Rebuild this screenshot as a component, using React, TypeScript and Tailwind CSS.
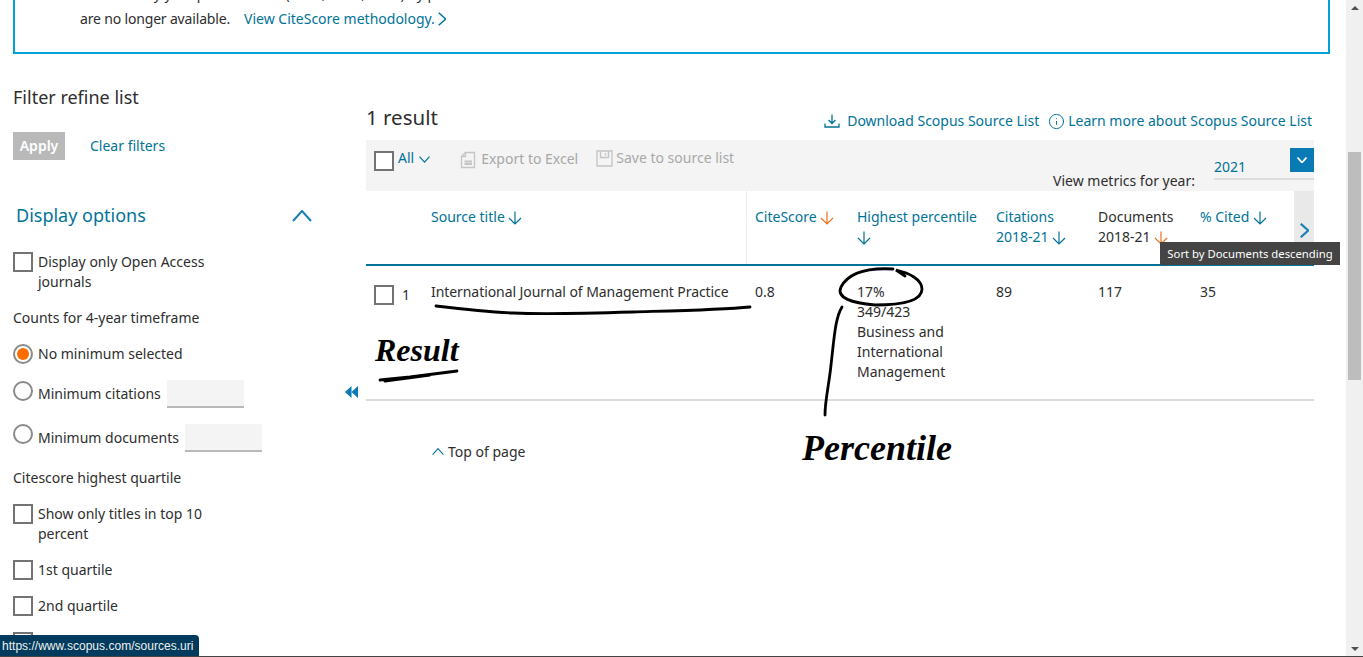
import { Info } from 'lucide-react';
import type { ReactNode } from 'react';

const Checkbox = () => <span className="block w-5 h-5 shrink-0 border-2 border-[#737373] bg-white" />;

const Radio = ({ on }: { on?: boolean }) => (
    <span className="flex items-center justify-center w-5 h-5 shrink-0 rounded-full border-2 border-[#8a8a8a] bg-white">
        {on && <span className="block w-3 h-3 rounded-full bg-[#ff6c00]" />}
    </span>
);

const CheckRow = ({ children }: { children: ReactNode }) => (
    <div className="flex gap-[5px] w-[200px]">
        <Checkbox />
        <span>{children}</span>
    </div>
);

const SortArrow = ({ active }: { active?: boolean }) => (
    <svg width="14" height="14" viewBox="0 0 14 14" fill="none" stroke={active ? '#e9711c' : '#007398'} strokeWidth="1.200" className="inline-block align-[-3px]">
        <path d="M7 .5V13M1 7L7 13L13 7" />
    </svg>
);

const ChevDown = ({ w, color, sw = 1.300 }: { w: number; color: string; sw?: number }) => (
    <svg width={w} height={w * 0.6} viewBox="0 0 20 12" fill="none" stroke={color} strokeWidth={(sw * 20) / w} className="shrink-0">
        <path d="M1 1L10 11L19 1" />
    </svg>
);

const ChevUp = ({ w, color, sw = 1.300 }: { w: number; color: string; sw?: number }) => (
    <svg width={w} height={w * 0.6} viewBox="0 0 20 12" fill="none" stroke={color} strokeWidth={(sw * 20) / w} className="shrink-0">
        <path d="M1 11L10 1L19 11" />
    </svg>
);

const ChevRight = ({ h, color, sw = 1.500 }: { h: number; color: string; sw?: number }) => (
    <svg width={h * 0.6} height={h} viewBox="0 0 12 20" fill="none" stroke={color} strokeWidth={(sw * 20) / h} className="inline-block shrink-0">
        <path d="M1 1L11 10L1 19" />
    </svg>
);

const MinInput = () => <span className="block w-[77px] h-7 ml-px bg-[#f4f4f4] border-b-2 border-[#b9b9b9]" />;

const Sidebar = () => (
    <aside className="w-[332px] ml-[13px] pt-[31px] shrink-0">
        <h2 className="text-[18px] leading-6 text-[#2e2e2e]">Filter refine list</h2>
        <div className="flex items-center mt-[23px]">
            <span className="flex items-center justify-center w-[52px] h-7 bg-[#b9b9b9] text-white font-semibold">Apply</span>
            <a className="ml-[25px] text-[#007398]">Clear filters</a>
        </div>
        <div className="flex items-center justify-between h-6 mt-[44px] pl-[3px] pr-[33px]">
            <span className="text-[18px] leading-6 text-[#007398] -mt-[2px]">Display options</span>
            <ChevUp w={20} color="#1a7fb5" sw={2} />
        </div>
        <div className="flex flex-col gap-4 mt-6">
            <CheckRow>Display only Open Access journals</CheckRow>
            <div>Counts for 4-year timeframe</div>
            <div className="flex gap-[5px]"><Radio on /><span>No minimum selected</span></div>
            <div className="flex h-7 gap-[5px]">
                <span className="mt-px"><Radio /></span>
                <span className="mt-1">Minimum citations</span>
                <MinInput />
            </div>
            <div className="flex h-7 gap-[5px]">
                <Radio />
                <span className="mt-1">Minimum documents</span>
                <MinInput />
            </div>
            <div>Citescore highest quartile</div>
            <CheckRow>Show only titles in top 10 percent</CheckRow>
            <CheckRow>1st quartile</CheckRow>
            <CheckRow>2nd quartile</CheckRow>
            <Checkbox />
        </div>
    </aside>
);

const DownloadIcon = () => (
    <svg width="16" height="16" viewBox="0 0 16 16" fill="none" stroke="#007398" strokeWidth="1.300">
        <path d="M8 1.500V10.500M4.500 7L8 10.500L11.500 7M1 10.500V14H15V10.500" />
    </svg>
);

const ExcelIcon = () => (
    <svg width="16" height="18" viewBox="0 0 16 18" fill="none" stroke="#c4c4c4" strokeWidth="1.300">
        <path d="M5.500 1.500H14.500V16.500H1.500V5.500Z" />
        <path d="M5.500 1.500V5.500H1.500" />
        <path d="M4.500 10.500H12M4.500 13H12" strokeWidth="1.800" />
    </svg>
);

const SaveIcon = () => (
    <svg width="17" height="17" viewBox="0 0 17 17" fill="none" stroke="#c4c4c4" strokeWidth="1.300">
        <path d="M1 1H16V16H1Z" />
        <path d="M4.500 1V7.500H12.500V1M9.500 3V5.500" />
    </svg>
);

const Toolbar = () => (
    <div className="flex justify-between h-[51px] bg-[#f4f4f4] pl-2">
        <div className="flex items-start">
            <span className="mt-[11px]"><Checkbox /></span>
            <span className="mt-2 ml-1 text-[#007398]">All</span>
            <span className="mt-[16px] ml-[5px]"><ChevDown w={11} color="#007398" sw={1.200} /></span>
            <span className="mt-[11px] ml-[30px]"><ExcelIcon /></span>
            <span className="mt-[9px] ml-[5px] text-[#a8a8a8]">Export to Excel</span>
            <span className="mt-[10px] ml-[18px]"><SaveIcon /></span>
            <span className="mt-2 ml-[3px] text-[#a8a8a8]">Save to source list</span>
        </div>
        <div className="flex">
            <span className="self-end mr-[19px] text-[#2e2e2e]">View metrics for year:</span>
            <div className="flex justify-between items-start w-[100px] h-[32px] mt-2 border-b-2 border-[#dcdcdc]">
                <span className="mt-[9px] text-[#007398]">2021</span>
                <span className="flex items-center justify-center w-6 h-6 bg-[#0a7ab5]">
                    <ChevDown w={10} color="#ffffff" sw={1.800} />
                </span>
            </div>
        </div>
    </div>
);

const colClass = 'grid grid-cols-[65px_315px_111px_139px_102px_102px_94px_20px]';

const ResultsTable = () => (
    <div className="relative">
        <div className={`${colClass} h-[75px] border-b-2 border-[#007398] text-[#007398]`}>
            <span />
            <div className="pt-4">Source title <SortArrow /></div>
            <div className="pt-4 pl-2 border-l border-[#ececec]">CiteScore <SortArrow active /></div>
            <div className="pt-4 pr-4">Highest percentile <SortArrow /></div>
            <div className="pt-4 pr-6">Citations 2018-21 <SortArrow /></div>
            <div className="pt-4 pr-6 text-[#2e2e2e]">Documents 2018-21 <SortArrow active /></div>
            <div className="pt-4">% Cited <SortArrow /></div>
            <div className="flex items-center justify-center pt-[5px] bg-[#e9e9e9]">
                <ChevRight h={15} color="#1a7fb5" sw={2.200} />
            </div>
        </div>
        <div className="absolute left-[794px] top-[51px] flex items-center justify-center w-[180px] h-[23px] bg-[#444444] text-white text-[11.3px]">
            Sort by Documents descending
        </div>
        <div className={`${colClass} pt-4 pb-[17px] border-b-2 border-[#dcdcdc] text-[#2e2e2e]`}>
            <div className="flex items-start gap-2 pl-2">
                <span className="mt-[3px]"><Checkbox /></span>
                <span className="mt-[3px]">1</span>
            </div>
            <div className="tracking-[-0.07px]">International Journal of Management Practice</div>
            <div className="pl-[9px]">0.8</div>
            <div className="pr-4">
                <div>17%</div>
                <div>349/423</div>
                <div className="w-[100px]">Business and International Management</div>
            </div>
            <div>89</div>
            <div>117</div>
            <div>35</div>
        </div>
    </div>
);

// hand-drawn marks made on top of the screenshot
const Annotations = () => (
    <>
        <svg className="absolute left-0 top-0 pointer-events-none" width="1346" height="657" fill="none" stroke="#000" strokeWidth="2.800" strokeLinecap="round">
            <path d="M436 306C470 310 490 312 513 313S600 313 633 312S720 310 750 307" />
            <path d="M380 380L410 377L457 371M385 381L430 375M392 380L420 376" />
            <path d="M893 269C875 268 850 270 841 287C836 298 852 303 875 305C900 305 922 302 922 289C922 280 910 273 896 270L905 276" />
            <path d="M842 307C835 318 834 340 831 365C829 385 825 400 825 415" />
        </svg>
        <span className="absolute left-[375px] top-[330px] text-[32px] leading-[40px] italic font-bold text-black font-['Liberation_Serif',serif]">Result</span>
        <span className="absolute left-[802px] top-[428px] text-[36px] leading-[40px] italic font-bold text-black font-['Liberation_Serif',serif]">Percentile</span>
    </>
);

const App = () => {
    return (
        <div className="relative flex w-[1363px] h-[657px] overflow-hidden bg-white text-[14px] leading-5 text-[#2e2e2e] font-['Noto_Sans',sans-serif]">
            <div className="w-[1346px] shrink-0">
                <div className="w-[1317px] h-[94px] ml-[13px] mt-[-40px] pt-[22px] pl-[65px] border-2 border-[#00a0d8]">
                    <p className="whitespace-nowrap mb-[5px]">CiteScore by year prior to 2018 (2011, 2012, 2013) by p</p>
                    <p className="flex items-center">
                        <span className="tracking-[-0.17px]">are no longer available.</span>
                        <a className="flex items-center gap-[3px] ml-[14px] text-[#007398]">
                            View CiteScore methodology.
                            <ChevRight h={14} color="#007398" sw={1.500} />
                        </a>
                    </p>
                </div>
                <div className="flex">
                    <Sidebar />
                    <div className="w-[21px] pt-[332px]">
                        <svg width="13" height="12" viewBox="0 0 13 12" fill="#0a7ab5">
                            <path d="M6.500 0V12L0 6ZM13 0V12L6.500 6Z" />
                        </svg>
                    </div>
                    <main className="w-[948px]">
                        <div className="flex items-end justify-between h-[86px] pb-[9px] pr-[2px]">
                            <h1 className="text-[20.500px] leading-7 text-[#2e2e2e]">1 result</h1>
                            <div className="flex items-center text-[#007398]">
                                <DownloadIcon />
                                <a className="ml-[7px]">Download Scopus Source List</a>
                                <Info size={17} strokeWidth={1.400} className="ml-[9px]" />
                                <a className="ml-[3px] -mt-px">Learn more about Scopus Source List</a>
                            </div>
                        </div>
                        <Toolbar />
                        <ResultsTable />
                        <div className="flex items-center gap-[4px] mt-[41px] pl-[66px]">
                            <ChevUp w={12} color="#007398" sw={1.100} />
                            <span>Top of page</span>
                        </div>
                    </main>
                </div>
            </div>
            <div className="flex flex-col items-center justify-between w-[17px] pt-[6px] pb-[6px] bg-[#f0f0f0] relative">
                <span className="block w-0 h-0 border-x-[4px] border-x-transparent border-b-[4px] border-b-[#505050]" />
                <span className="absolute left-[2px] top-[152px] block w-[13px] h-[228px] bg-[#bdbdbd]" />
                <span className="block w-0 h-0 border-x-[4px] border-x-transparent border-t-[4px] border-t-[#505050]" />
            </div>
            <Annotations />
            <div className="absolute left-0 top-[635px] flex items-center w-[199px] h-[21px] pl-[2px] bg-[#003a5c] text-[#f0f0f0] rounded-tr-[4px] text-[12px] tracking-[0.02px] font-['Liberation_Sans',sans-serif] whitespace-nowrap">
                https://www.scopus.com/sources.uri
            </div>
            <div className="absolute left-0 bottom-0 w-full h-px bg-[#444444]" />
        </div>
    );
};

export default App;
